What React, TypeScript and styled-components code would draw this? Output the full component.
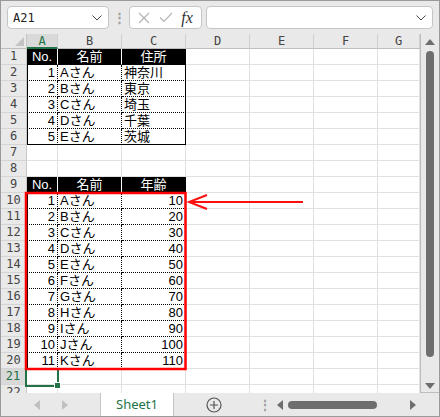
import styled, { createGlobalStyle } from "styled-components";

const Global = createGlobalStyle`
  html, body { margin: 0; padding: 0; background: #fff; }
  body { font-family: "Noto Sans", "Liberation Sans", sans-serif; }
`;

const GREEN = "#217346";
const GRID = "#e1e1e1";
const CJK = `"Liberation Sans", "Noto Sans CJK JP", sans-serif`;

const Frame = styled.div`
  position: relative;
  width: 440px;
  height: 417px;
  box-sizing: border-box;
  border: 1px solid #9a9a9a;
  background: #e9e9e9;
  overflow: hidden;
  display: flex;
  flex-direction: column;
`;

const FormulaBar = styled.div`
  height: 33px;
  display: flex;
  align-items: center;
  padding: 0 6px;
  box-sizing: border-box;
`;

const Box = styled.div<{ $w?: number; $grow?: boolean }>`
  height: 23px;
  box-sizing: border-box;
  background: #fff;
  border: 1px solid #c6c6c6;
  border-radius: 4px;
  display: flex;
  align-items: center;
  ${({ $w }) => ($w ? `width: ${$w}px;` : "")}
  ${({ $grow }) => ($grow ? "flex: 1; margin-left: 4px;" : "")}
`;

const NameText = styled.span`
  flex: 1;
  padding-left: 5px;
  font-family: "DejaVu Sans Mono", monospace;
  font-size: 12px;
  color: #222;
`;

const Chevron = styled.svg`
  margin-right: 6px;
`;

const VDots = styled.div`
  width: 20px;
  text-align: center;
  color: #9a9a9a;
  font-size: 13px;
  font-weight: bold;
  line-height: 1;
`;

const FxGroup = styled.div`
  display: flex;
  align-items: center;
  justify-content: space-around;
  width: 100%;
  padding: 0 4px;
`;

const Fx = styled.span`
  font-family: "Liberation Serif", serif;
  font-style: italic;
  font-size: 16px;
  color: #333;
`;

const Main = styled.div`
  display: flex;
  flex: 1;
  min-height: 0;
`;

const SheetWrap = styled.div`
  position: relative;
  width: 419px;
  height: 359px;
  background: #fff;
  border-right: 1px solid #bdbdbd;
  overflow: hidden;
`;

const Sheet = styled.div`
  display: grid;
  grid-template-columns: 26px 31px 64px 64px 64px 64px 64px 42px;
  grid-template-rows: 15px repeat(22, 16px);
`;

const Corner = styled.div`
  position: relative;
  background: #e9e9e9;
  border-right: 1px solid #c8c8c8;
  border-bottom: 1px solid #bdbdbd;
  box-sizing: border-box;
  &::after {
    content: "";
    position: absolute;
    right: 2px;
    bottom: 2px;
    border-style: solid;
    border-width: 0 0 9px 9px;
    border-color: transparent transparent #c4c4c4 transparent;
  }
`;

const ColHead = styled.div<{ $sel?: boolean }>`
  background: ${({ $sel }) => ($sel ? "#d9d9d9" : "#e9e9e9")};
  border-right: 1px solid #d0d0d0;
  border-bottom: ${({ $sel }) => ($sel ? `2px solid ${GREEN}` : "1px solid #bdbdbd")};
  box-sizing: border-box;
  color: ${({ $sel }) => ($sel ? GREEN : "#444")};
  font-family: "DejaVu Sans Mono", monospace;
  font-size: 12px;
  line-height: 14px;
  text-align: center;
`;

const RowHead = styled.div<{ $sel?: boolean }>`
  background: ${({ $sel }) => ($sel ? "#d9d9d9" : "#e9e9e9")};
  border-right: ${({ $sel }) => ($sel ? `2px solid ${GREEN}` : "1px solid #c8c8c8")};
  border-bottom: 1px solid #d4d4d4;
  box-sizing: border-box;
  color: ${({ $sel }) => ($sel ? GREEN : "#444")};
  font-family: "DejaVu Sans Mono", monospace;
  font-size: 12px;
  line-height: 15px;
  text-align: center;
`;

type Kind = "empty" | "head" | "data";

const Cell = styled.div<{
  $kind: Kind;
  $first?: boolean;
  $last?: boolean;
  $bottom?: boolean;
  $align?: "left" | "right" | "center";
}>`
  box-sizing: border-box;
  overflow: hidden;
  white-space: nowrap;
  font-family: ${CJK};
  font-size: 13px;
  line-height: 15px;
  padding: 0 2px;
  text-align: ${({ $align }) => $align ?? "left"};
  background: ${({ $kind }) => ($kind === "head" ? "#000" : "#fff")};
  color: ${({ $kind }) => ($kind === "head" ? "#fff" : "#000")};
  border-right: ${({ $kind, $last }) =>
    $kind === "empty" ? `1px solid ${GRID}` : $last ? "1px solid #000" : $kind === "head" ? "1px solid #fff" : "1px dotted #000"};
  border-bottom: ${({ $kind, $bottom }) =>
    $kind === "empty" ? `1px solid ${GRID}` : $kind === "head" || $bottom ? "1px solid #000" : "1px dotted #000"};
  box-shadow: ${({ $first, $kind }) => ($first && $kind !== "empty" ? "inset 1px 0 0 #000" : "none")};
`;

const Selection = styled.div`
  position: absolute;
  left: 24px;
  top: 334px;
  width: 34px;
  height: 19px;
  box-sizing: border-box;
  border: 2px solid ${GREEN};
  &::after {
    content: "";
    position: absolute;
    right: -4px;
    bottom: -4px;
    width: 5px;
    height: 5px;
    background: ${GREEN};
    border: 1px solid #fff;
  }
`;

const Annot = styled.svg`
  position: absolute;
  left: 0;
  top: 0;
  pointer-events: none;
`;

const VScroll = styled.div`
  width: 18px;
  display: flex;
  flex-direction: column;
  align-items: center;
  padding: 4px 0 2px;
  box-sizing: border-box;
  gap: 5px;
`;

const VThumb = styled.div`
  width: 8px;
  flex: 1;
  margin-bottom: 20px;
  border-radius: 4px;
  background: #6e6e6e;
`;

const BottomBar = styled.div`
  display: flex;
  height: 24px;
  border-top: 1px solid #bdbdbd;
  box-sizing: border-box;
`;

const Nav = styled.div`
  width: 99px;
  display: flex;
  align-items: center;
  justify-content: center;
  gap: 20px;
  border-right: 1px solid #c4c4c4;
`;

const Tab = styled.div`
  width: 72px;
  background: #fff;
  color: ${GREEN};
  font-family: "Noto Sans", sans-serif;
  font-size: 13px;
  display: flex;
  align-items: center;
  justify-content: center;
  border-right: 1px solid #c4c4c4;
  margin-top: -1px;
`;

const AddTab = styled.div`
  width: 80px;
  display: flex;
  align-items: center;
  justify-content: center;
`;

const HScroll = styled.div`
  flex: 1;
  display: flex;
  align-items: center;
  padding-right: 22px;
`;

const HDots = styled.span`
  width: 22px;
  text-align: center;
  color: #9a9a9a;
  font-size: 12px;
  font-weight: bold;
`;

const HThumb = styled.div`
  width: 89px;
  height: 8px;
  border-radius: 4px;
  background: #6e6e6e;
  margin: 0 4px;
`;

const Spacer = styled.div`
  flex: 1;
`;

const Tri = ({ dir, color = "#6e6e6e" }: { dir: "up" | "down" | "left" | "right"; color?: string }) => {
  const pts = {
    up: "0,7 5,1 10,7",
    down: "0,1 5,7 10,1",
    left: "7,0 1,5 7,10",
    right: "1,0 7,5 1,10",
  }[dir];
  const vertical = dir === "up" || dir === "down";
  return (
    <svg width={vertical ? 10 : 8} height={vertical ? 8 : 10} viewBox={vertical ? "0 0 10 8" : "0 0 8 10"}>
      <polygon points={pts} fill={color} />
    </svg>
  );
};

const ChevronIcon = () => (
  <Chevron width="10" height="6" viewBox="0 0 10 6">
    <path d="M0.5 0.5 L5 5 L9.5 0.5" fill="none" stroke="#444" strokeWidth="1" />
  </Chevron>
);

type Row = { kind: Kind[]; values: (string | number)[]; bottom?: boolean };

const cols = ["A", "B", "C", "D", "E", "F", "G"];

function buildRows(): Row[] {
  const rows: Row[] = [];
  rows.push({ kind: ["head", "head", "head"], values: ["No.", "名前", "住所"] });
  const t1 = [
    ["Aさん", "神奈川"],
    ["Bさん", "東京"],
    ["Cさん", "埼玉"],
    ["Dさん", "千葉"],
    ["Eさん", "茨城"],
  ];
  t1.forEach(([n, p], i) =>
    rows.push({ kind: ["data", "data", "data"], values: [i + 1, n, p], bottom: i === t1.length - 1 })
  );
  rows.push({ kind: [], values: [] });
  rows.push({ kind: [], values: [] });
  rows.push({ kind: ["head", "head", "head"], values: ["No.", "名前", "年齢"] });
  const letters = "ABCDEFGHIJK";
  for (let i = 0; i < 11; i++) {
    rows.push({ kind: ["data", "data", "data"], values: [i + 1, `${letters[i]}さん`, (i + 1) * 10], bottom: i === 10 });
  }
  rows.push({ kind: [], values: [] });
  rows.push({ kind: [], values: [] });
  return rows;
}

const rows = buildRows();

export default function App() {
  return (
    <>
      <Global />
      <Frame>
        <FormulaBar>
          <Box $w={102}>
            <NameText>A21</NameText>
            <ChevronIcon />
          </Box>
          <VDots>⋮</VDots>
          <Box $w={73}>
            <FxGroup>
              <svg width="12" height="12" viewBox="0 0 12 12">
                <path d="M1 1 L11 11 M11 1 L1 11" stroke="#b4b4b4" strokeWidth="1.2" />
              </svg>
              <svg width="14" height="11" viewBox="0 0 14 11">
                <path d="M1 5.5 L5 9.5 L13 1" fill="none" stroke="#b4b4b4" strokeWidth="1.2" />
              </svg>
              <Fx>fx</Fx>
            </FxGroup>
          </Box>
          <Box $grow>
            <Spacer />
            <ChevronIcon />
          </Box>
        </FormulaBar>
        <Main>
          <SheetWrap>
            <Sheet>
              <Corner />
              {cols.map((c) => (
                <ColHead key={c} $sel={c === "A"}>
                  {c}
                </ColHead>
              ))}
              {rows.map((r, ri) => {
                const n = ri + 1;
                return [
                  <RowHead key={`h${n}`} $sel={n === 21}>
                    {n}
                  </RowHead>,
                  ...cols.map((c, ci) => {
                    const kind: Kind = r.kind[ci] ?? "empty";
                    const v = r.values[ci];
                    const align = kind === "head" ? "center" : typeof v === "number" ? "right" : "left";
                    return (
                      <Cell
                        key={`${c}${n}`}
                        $kind={kind}
                        $first={ci === 0}
                        $last={ci === 2}
                        $bottom={r.bottom}
                        $align={align}
                      >
                        {v}
                      </Cell>
                    );
                  }),
                ];
              })}
            </Sheet>
            <Selection />
            <Annot width="419" height="359">
              <rect x="25" y="159" width="159.5" height="176" fill="none" stroke="#ff0000" strokeWidth="2.5" />
              <path d="M302 168 L188 168 M206 161 L188 168 L206 175" fill="none" stroke="#ff1010" strokeWidth="2" />
            </Annot>
          </SheetWrap>
          <VScroll>
            <Tri dir="up" />
            <VThumb />
            <Tri dir="down" />
          </VScroll>
        </Main>
        <BottomBar>
          <Nav>
            <Tri dir="left" color="#c0c0c0" />
            <Tri dir="right" color="#c0c0c0" />
          </Nav>
          <Tab>Sheet1</Tab>
          <AddTab>
            <svg width="16" height="16" viewBox="0 0 16 16">
              <circle cx="8" cy="8" r="7" fill="none" stroke="#555" strokeWidth="1.2" />
              <path d="M8 4 V12 M4 8 H12" stroke="#555" strokeWidth="1.2" />
            </svg>
          </AddTab>
          <HScroll>
            <HDots>⋮</HDots>
            <Tri dir="left" />
            <HThumb />
            <Spacer />
            <Tri dir="right" />
          </HScroll>
        </BottomBar>
      </Frame>
    </>
  );
}
